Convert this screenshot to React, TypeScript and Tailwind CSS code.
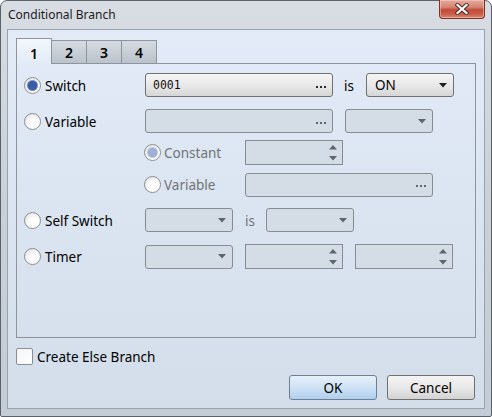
import React from "react";

const FONT = { fontFamily: '"Noto Sans", "Liberation Sans", sans-serif' };

function Radio({ checked = false, disabled = false }: { checked?: boolean; disabled?: boolean }) {
  return (
    <span className="flex h-[17px] w-[17px] shrink-0 items-center justify-center rounded-full border border-[#8b8d90] bg-[radial-gradient(circle_at_62%_68%,#ffffff_35%,#ececec_70%,#d2d4d6_100%)]">
      {checked && (
        <span
          className={
            disabled
              ? "h-[9px] w-[9px] rounded-full bg-[#9fb0d4] shadow-[0_0_0_1px_#b7c3dd]"
              : "h-[9px] w-[9px] rounded-full bg-[#3b5ba8] shadow-[0_0_0_1px_#6d87c4]"
          }
        />
      )}
    </span>
  );
}

function Dots({ disabled = false }: { disabled?: boolean }) {
  const c = disabled ? "h-[2px] w-[2px] bg-[#5f656b]" : "h-[2px] w-[2px] bg-[#2a2a2a]";
  return (
    <span className="flex items-center gap-[2px] pt-[3px]">
      <span className={c} />
      <span className={c} />
      <span className={c} />
    </span>
  );
}

function Arrow({ disabled = false }: { disabled?: boolean }) {
  return (
    <svg width="8" height="5" viewBox="0 0 8 5">
      <polygon points="0,0 8,0 4,4.5" fill={disabled ? "#5f656b" : "#1e1e1e"} />
    </svg>
  );
}

function DotField({ w, disabled = false, children }: { w: string; disabled?: boolean; children?: React.ReactNode }) {
  return (
    <div
      className={
        (disabled
          ? "border-[#858c94] bg-[#d4dce6] "
          : "border-[#707070] bg-gradient-to-b from-[#f5f5f5] via-[#e9e9e9] to-[#d6d6d6] ") +
        "flex h-[24px] shrink-0 items-center justify-between rounded-[3px] border pl-[7px] pr-[6px] " +
        w
      }
    >
      <span className="flex items-center">{children}</span>
      <Dots disabled={disabled} />
    </div>
  );
}

function Combo({ disabled = false, children }: { disabled?: boolean; children?: React.ReactNode }) {
  return (
    <div
      className={
        (disabled
          ? "border-[#858c94] bg-[#d4dce6] "
          : "border-[#707070] bg-gradient-to-b from-[#f5f5f5] via-[#e9e9e9] to-[#d6d6d6] ") +
        "flex h-[24px] w-[88px] shrink-0 items-center justify-between rounded-[3px] border pl-[8px] pr-[6px]"
      }
    >
      <span className="pt-[2px] text-[13.5px] leading-none text-black">{children}</span>
      <Arrow disabled={disabled} />
    </div>
  );
}

function Spin() {
  return (
    <div className="flex h-[25px] w-[98px] shrink-0 items-center justify-end border border-[#858c94] bg-[#d4dce6] pr-[5px]">
      <span className="flex flex-col gap-[6px]">
        <svg width="8" height="5" viewBox="0 0 8 5">
          <polygon points="0,4.5 8,4.5 4,0" fill="#5f656b" />
        </svg>
        <svg width="8" height="5" viewBox="0 0 8 5">
          <polygon points="0,0 8,0 4,4.5" fill="#5f656b" />
        </svg>
      </span>
    </div>
  );
}

function MainLabel({ checked = false, text }: { checked?: boolean; text: string }) {
  return (
    <div className="flex w-[128px] shrink-0 items-center gap-[4px] pl-[7px]">
      <Radio checked={checked} />
      <span className="pt-[3px] text-[13.5px] font-[450] leading-none text-black">{text}</span>
    </div>
  );
}

function CloseButton() {
  return (
    <div className="flex h-[19px] w-[46px] items-center justify-center rounded-b-[4px] border border-t-0 border-[#7a3328] bg-[linear-gradient(to_bottom,#e6aa9c_0%,#d58572_40%,#c2493a_55%,#cb604c_80%,#dc8a72_100%)] shadow-[inset_0_0_0_1px_rgba(255,220,210,0.45)]">
      <svg width="14" height="12" viewBox="0 0 14 12">
        <path d="M2.5 2 L11.5 10 M11.5 2 L2.5 10" stroke="#4a2a24" strokeWidth="4" strokeLinecap="square" />
        <path d="M2.5 2 L11.5 10 M11.5 2 L2.5 10" stroke="#ffffff" strokeWidth="2.2" strokeLinecap="square" />
      </svg>
    </div>
  );
}

export default function App() {
  return (
    <div className="h-[417px] w-[492px] bg-white" style={FONT}>
      <div className="flex h-[417px] w-[492px] flex-col rounded-t-[7px] rounded-b-[2px] border border-[#5b626a] bg-gradient-to-b from-[#d8dde3] via-[#c9d0d8] to-[#c4ccd5]">
        {/* Title bar */}
        <div className="flex h-[28px] shrink-0 items-start justify-between">
          <span className="pl-[7px] pt-[6px] text-[12px] leading-[16px] text-[#1b1b1b]">Conditional Branch</span>
          <div className="mr-[6px] -mt-[1px]">
            <CloseButton />
          </div>
        </div>

        {/* Client area */}
        <div className="mx-[6px] mb-[7px] flex flex-1 flex-col border border-[#98a3af] bg-gradient-to-b from-[#e2ebf7] to-[#d3deea]">
          {/* Tabs */}
          <div className="ml-[8px] mt-[8px] flex h-[25px] items-end">
            <div className="relative z-10 -mb-[1px] flex h-[26px] w-[36px] items-start justify-center border border-b-0 border-[#8d949c] bg-gradient-to-b from-[#f3f7fc] to-[#e2ebf7] pt-[4px] text-[14px] font-semibold text-black">
              1
            </div>
            {["2", "3", "4"].map((t) => (
              <div
                key={t}
                className="-ml-[1px] flex h-[23px] w-[36px] items-center justify-center border border-b-0 border-[#8d949c] bg-gradient-to-b from-[#d6dbe1] to-[#bac2cb] text-[14px] font-semibold text-black"
              >
                {t}
              </div>
            ))}
          </div>

          {/* Panel */}
          <div className="mx-[8px] flex h-[275px] shrink-0 flex-col border border-[#8d949c] pt-[9px]">
            {/* Switch row */}
            <div className="flex h-[24px] items-center">
              <MainLabel checked text="Switch" />
              <DotField w="w-[188px]">
                <span className="pt-[1px] leading-none text-[#111]" style={{ fontFamily: '"DejaVu Sans Mono", monospace', fontSize: "11.5px" }}>
                  0001
                </span>
              </DotField>
              <span className="ml-[11px] w-[22px] shrink-0 pt-[3px] text-[13.5px] font-[450] leading-none text-black">is</span>
              <Combo>ON</Combo>
            </div>

            {/* Variable row */}
            <div className="mt-[12px] flex h-[24px] items-center">
              <MainLabel text="Variable" />
              <DotField w="w-[188px]" disabled />
              <div className="ml-[12px]">
                <Combo disabled />
              </div>
            </div>

            {/* Constant row */}
            <div className="mt-[7px] flex h-[25px] items-center">
              <div className="w-[127px] shrink-0" />
              <div className="flex w-[101px] shrink-0 items-center gap-[3px]">
                <Radio checked disabled />
                <span className="pt-[3px] text-[13.5px] font-[450] leading-none text-[#6f7479]">Constant</span>
              </div>
              <Spin />
            </div>

            {/* Variable sub row */}
            <div className="mt-[7px] flex h-[25px] items-center">
              <div className="w-[127px] shrink-0" />
              <div className="flex w-[101px] shrink-0 items-center gap-[3px]">
                <Radio />
                <span className="pt-[3px] text-[13.5px] font-[450] leading-none text-[#6f7479]">Variable</span>
              </div>
              <DotField w="w-[188px]" disabled />
            </div>

            {/* Self switch row */}
            <div className="mt-[11px] flex h-[24px] items-center">
              <MainLabel text="Self Switch" />
              <Combo disabled />
              <span className="ml-[12px] w-[21px] shrink-0 pt-[3px] text-[13.5px] font-[450] leading-none text-[#6f7479]">is</span>
              <Combo disabled />
            </div>

            {/* Timer row */}
            <div className="mt-[12px] flex h-[25px] items-center">
              <MainLabel text="Timer" />
              <Combo disabled />
              <div className="ml-[12px] flex gap-[12px]">
                <Spin />
                <Spin />
              </div>
            </div>
          </div>

          {/* Checkbox */}
          <div className="ml-[8px] mt-[10px] flex h-[17px] items-center gap-[4px]">
            <span className="h-[17px] w-[17px] rounded-[2px] border border-[#8b8d90] bg-gradient-to-br from-[#f4f4f4] to-[#ffffff]" />
            <span className="pt-[3px] text-[13.5px] font-[450] leading-none text-black">Create Else Branch</span>
          </div>

          {/* Buttons */}
          <div className="mr-[9px] mt-[10px] flex justify-end gap-[10px]">
            <button className="flex h-[25px] w-[88px] items-center justify-center rounded-[3px] border border-[#6f7f92] bg-gradient-to-b from-[#e6f0fa] via-[#cfe2f5] to-[#b0cfee] pt-[1px] text-[13.5px] font-[450] text-black">
              OK
            </button>
            <button className="flex h-[25px] w-[88px] items-center justify-center rounded-[3px] border border-[#707070] bg-gradient-to-b from-[#f4f4f4] via-[#e8e8e8] to-[#d3d3d3] pt-[1px] text-[13.5px] font-[450] text-black">
              Cancel
            </button>
          </div>
        </div>
      </div>
    </div>
  );
}
